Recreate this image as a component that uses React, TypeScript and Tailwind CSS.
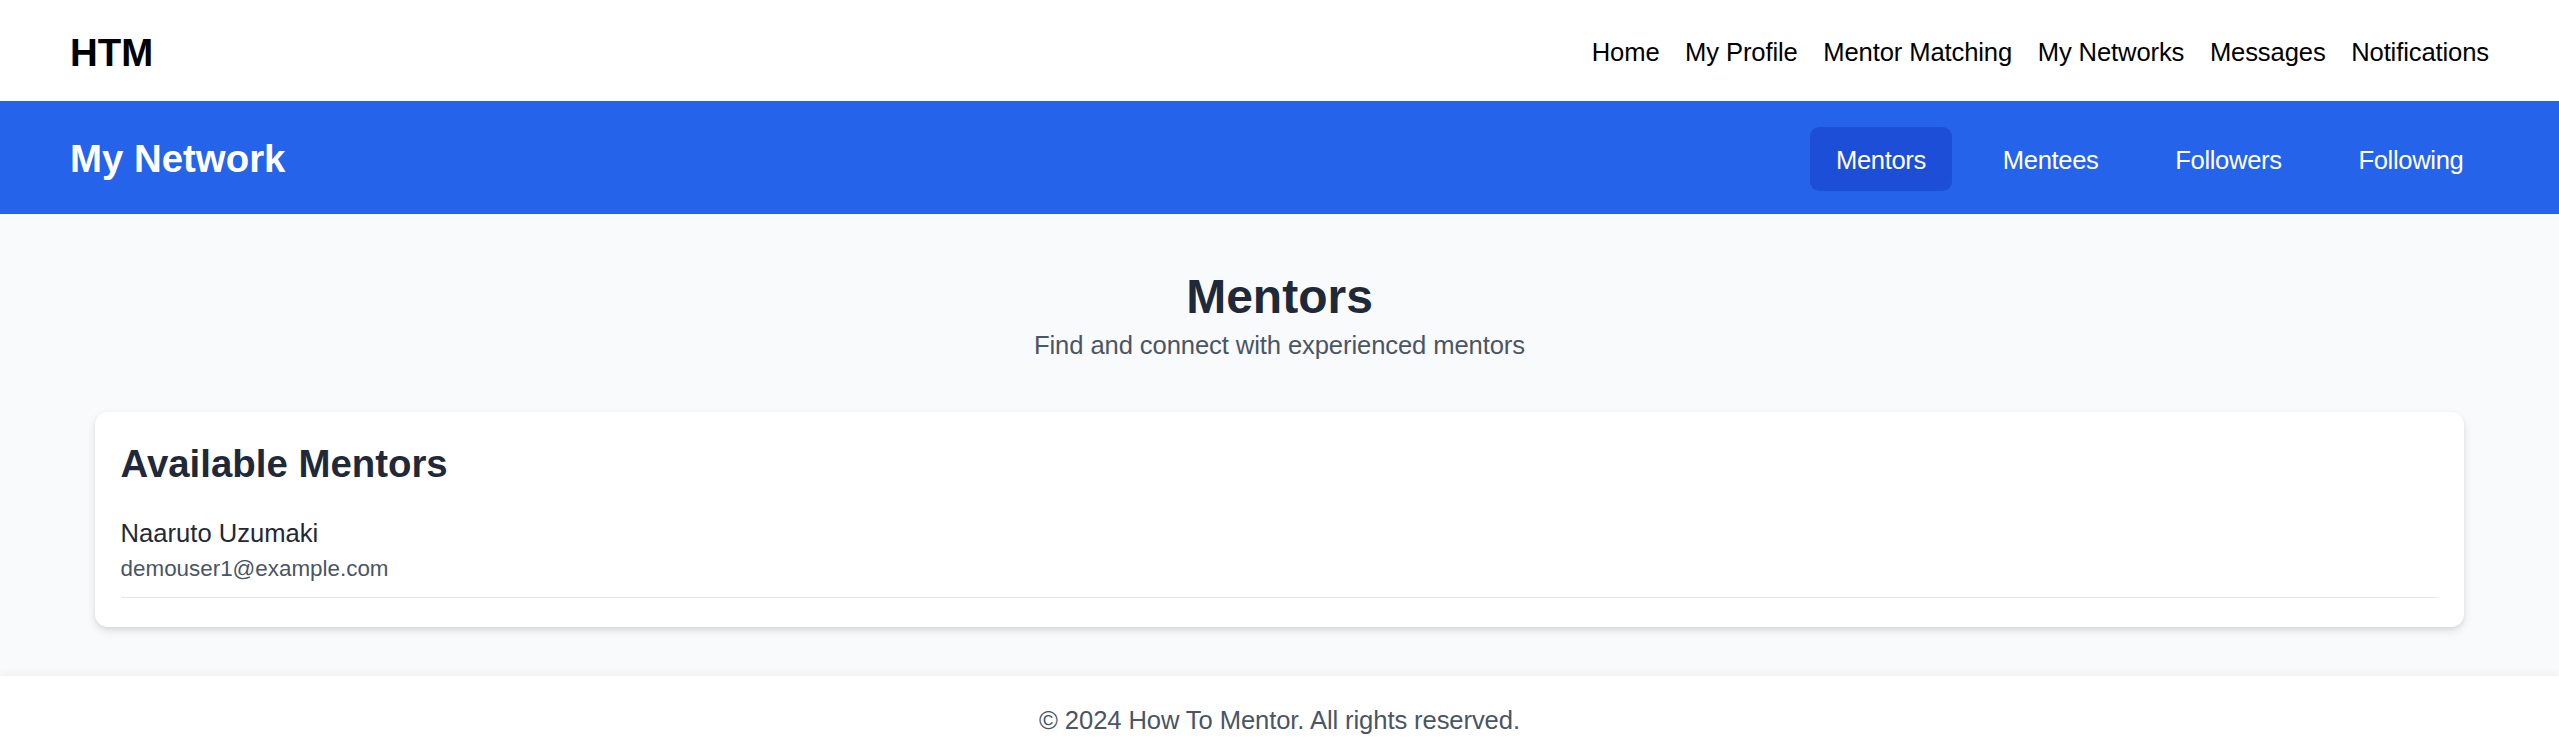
import React from 'react';

const topLinks = ['Home', 'My Profile', 'Mentor Matching', 'My Networks', 'Messages', 'Notifications'];
const tabs = ['Mentors', 'Mentees', 'Followers', 'Following'];

const mentors = [{ name: 'Naaruto Uzumaki', email: 'demouser1@example.com' }];

export default function App() {
  const active = 'Mentors';

  return (
    <div className="min-h-screen flex flex-col bg-gray-50 font-['Liberation_Sans',Arial,sans-serif]">
      {/* Top navigation */}
      <nav className="bg-white h-[101px] pt-[4px] px-[70px] flex items-center justify-between">
        <a href="#" className="text-[38.4px] leading-[51.2px] font-bold text-black">
          HTM
        </a>
        <ul className="flex items-center gap-[25.6px] text-[25.6px] leading-[38.4px] tracking-[-0.12px] text-black">
          {topLinks.map((link) => (
            <li key={link}>
              <a href="#">{link}</a>
            </li>
          ))}
        </ul>
      </nav>

      {/* Network header */}
      <header className="bg-[#2563eb] h-[113px] pt-[3px] px-[70px] flex items-center justify-between">
        <h1 className="text-[38.4px] leading-[51.2px] font-bold text-white">My Network</h1>
        <div className="flex items-center gap-[25.6px]">
          {tabs.map((tab) => (
            <button
              key={tab}
              className={`px-[25.6px] pt-[14px] pb-[11.6px] rounded-[9.6px] text-[25.6px] leading-[38.4px] tracking-[-0.35px] text-white ${
                tab === active ? 'bg-[#1d4ed8]' : ''
              }`}
            >
              {tab}
            </button>
          ))}
        </div>
      </header>

      {/* Content */}
      <main className="flex-1 px-[95px] pt-[54px] pb-[49px]">
        <div className="text-center mb-[48px]">
          <h2 className="text-[48px] leading-[57.6px] font-bold text-[#1f2937]">Mentors</h2>
          <p className="text-[25.6px] leading-[38.4px] tracking-[-0.1px] text-gray-600">
            Find and connect with experienced mentors
          </p>
        </div>

        <div className="bg-white rounded-[12.8px] px-[25.6px] pt-[25.6px] pb-[29px] shadow-[0_4px_10px_rgba(0,0,0,0.1),0_2px_4px_rgba(0,0,0,0.06)]">
          <h3 className="text-[38.4px] leading-[51.2px] font-bold text-[#1f2937] mb-[25.6px]">
            Available Mentors
          </h3>
          <ul>
            {mentors.map((m) => (
              <li key={m.email} className="pb-[12px] border-b-[1.6px] border-gray-200">
                <p className="text-[25.6px] leading-[38.4px] font-medium text-[#1f2937]">{m.name}</p>
                <p className="text-[22.4px] leading-[32px] text-gray-600">{m.email}</p>
              </li>
            ))}
          </ul>
        </div>
      </main>

      {/* Footer */}
      <footer className="bg-white py-[25.6px] shadow-[0_-3px_8px_rgba(0,0,0,0.04)] text-center">
        <p className="text-[25.6px] leading-[38.4px] tracking-[-0.1px] text-gray-600">
          © 2024 How To Mentor. All rights reserved.
        </p>
      </footer>
    </div>
  );
}
